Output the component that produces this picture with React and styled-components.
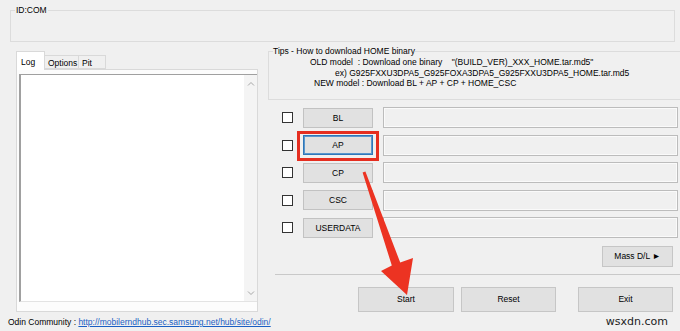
import styled, { createGlobalStyle } from 'styled-components'

const GlobalStyle = createGlobalStyle`
  html, body {
    margin: 0;
    padding: 0;
    background: #f0f0f0;
  }
  body {
    font-family: "Liberation Sans", Arial, sans-serif;
    font-size: 8.5px;
    color: #000;
  }
`

const Window = styled.div`
  position: relative;
  width: 680px;
  height: 331px;
  overflow: hidden;
  background: #f0f0f0;
  display: flex;
  flex-direction: column;
`

const GroupBox = styled.fieldset`
  margin: 0;
  padding: 0 0 0 4px;
  border: 1px solid #dcdcdc;
  min-width: 0;

  legend {
    padding: 0 1px;
    line-height: 10px;
  }
`

const IdGroup = styled(GroupBox)`
  margin: 5px 5px 0 10px;
`

const IdBody = styled.div`
  height: 26px;
`

const Main = styled.div`
  display: flex;
  margin-top: 4px;
  padding-left: 16px;
`

const LeftCol = styled.div`
  width: 242px;
  margin-right: 10px;
  padding-top: 4px;
  display: flex;
  flex-direction: column;
`

const TabRow = styled.div`
  display: flex;
  align-items: flex-end;
  height: 19px;
`

const Tab = styled.div`
  position: relative;
  z-index: ${(p) => (p.$active ? 1 : 0)};
  height: ${(p) => (p.$active ? '19px' : '14px')};
  width: ${(p) => p.$w}px;
  box-sizing: border-box;
  padding: ${(p) => (p.$active ? '5px 0 0 4px' : '2px 0 0 3px')};
  background: ${(p) => (p.$active ? '#fff' : '#f0f0f0')};
  border: 1px solid #d9d9d9;
  border-bottom: ${(p) => (p.$active ? 'none' : '1px solid #d9d9d9')};
  margin-left: ${(p) => (p.$active ? '0' : '-1px')};
  margin-bottom: ${(p) => (p.$active ? '-1px' : '0')};
`

const Pane = styled.div`
  height: 243px;
  box-sizing: border-box;
  background: #fcfcfc;
  border: 1px solid #d9d9d9;
  padding: 4px 0 9px 2px;
  display: flex;
`

const LogArea = styled.div`
  flex: 1;
  display: flex;
  background: #fff;
  border-top: 1px solid #a0a0a0;
  border-left: 2px solid #a0a0a0;
  border-bottom: 1px solid #e3e3e3;
`

const LogText = styled.div`
  flex: 1;
`

const ScrollBar = styled.div`
  width: 13px;
  background: #f4f4f4;
  display: flex;
  flex-direction: column;
  justify-content: space-between;
  align-items: center;
  padding: 6px 0 5px;
`

const RightCol = styled.div`
  flex: 1;
  display: flex;
  flex-direction: column;
`

const TipsGroup = styled(GroupBox)`
  margin-right: -10px;
  padding-bottom: 10px;

  legend {
    padding: 0;
  }
`

const TipLine = styled.div`
  line-height: 10.5px;
  white-space: pre;
  padding-left: ${(p) => p.$indent}px;
  &:first-of-type {
    margin-top: 1px;
  }
`

const SlotList = styled.div`
  display: flex;
  flex-direction: column;
  gap: 7.5px;
  margin-top: 8px;
  padding-left: 14px;
`

const SlotRow = styled.div`
  display: flex;
  align-items: center;
  height: 20px;
`

const Check = styled.span`
  width: 11px;
  height: 11px;
  box-sizing: border-box;
  background: #fff;
  border: 1px solid #333;
  margin-right: 10px;
`

const SlotButton = styled.button`
  position: relative;
  width: 70px;
  height: 20px;
  margin: 0 10px 0 0;
  padding: 0;
  font: inherit;
  color: #000;
  background: #e1e1e1;
  border: 1px solid ${(p) => (p.$focus ? '#2f76b8' : '#c2c2c2')};
  box-shadow: ${(p) => (p.$focus ? 'inset 0 0 0 1px #5a97cd' : 'none')};
`

const Highlight = styled.span`
  position: absolute;
  left: -7px;
  right: -7px;
  top: -5px;
  bottom: -7px;
  border: 3px solid #e52e20;
  pointer-events: none;
`

const PathField = styled.div`
  width: 295px;
  height: 21px;
  box-sizing: border-box;
  background: #f0f0f0;
  border: 1px solid #bcbcbc;
  box-shadow: inset 0 0 0 1px #fafafa;
`

const MassRow = styled.div`
  display: flex;
  justify-content: flex-end;
  margin-top: 8px;
  padding-right: 7px;
`

const Separator = styled.div`
  height: 1px;
  background: #c9c9c9;
  margin: 7px 0 0 7px;
`

const ActionRow = styled.div`
  display: flex;
  justify-content: flex-end;
  gap: 7px;
  margin-top: 12px;
  padding-right: 7px;
`

const WinButton = styled.button`
  width: ${(p) => p.$w}px;
  height: ${(p) => p.$h}px;
  margin: 0;
  margin-left: ${(p) => p.$ml || 0}px;
  padding: 0;
  font: inherit;
  color: #000;
  background: #e1e1e1;
  border: 1px solid #c6c6c6;
`

const Footer = styled.div`
  display: flex;
  justify-content: space-between;
  align-items: center;
  margin-top: 5px;
  padding: 0 12px 0 8px;
  line-height: 10px;
`

const Link = styled.a`
  color: #1a5fc4;
  text-decoration: underline;
`

const Watermark = styled.span`
  font-family: "DejaVu Sans", Verdana, sans-serif;
  font-size: 11px;
  color: #222;
`

const Overlay = styled.svg`
  position: absolute;
  left: 0;
  top: 0;
  pointer-events: none;
`

const Chevron = ({ up }) => (
  <svg width='8' height='5' viewBox='0 0 8 5'>
    <polyline
      points={up ? '1,4.5 4,1.5 7,4.5' : '1,0.5 4,3.5 7,0.5'}
      fill='none'
      stroke='#a6a6a6'
      strokeWidth='1'
    />
  </svg>
)

const slots = ['BL', 'AP', 'CP', 'CSC', 'USERDATA']

const App = () => {
  return (
    <Window>
      <GlobalStyle />
      <IdGroup>
        <legend>ID:COM</legend>
        <IdBody />
      </IdGroup>
      <Main>
        <LeftCol>
          <TabRow>
            <Tab $active $w={29}>Log</Tab>
            <Tab $w={35}>Options</Tab>
            <Tab $w={28}>Pit</Tab>
          </TabRow>
          <Pane>
            <LogArea>
              <LogText />
              <ScrollBar>
                <Chevron up />
                <Chevron />
              </ScrollBar>
            </LogArea>
          </Pane>
        </LeftCol>
        <RightCol>
          <TipsGroup>
            <legend>Tips - How to download HOME binary</legend>
            <TipLine $indent={37}>
              {'OLD model  : Download one binary    "(BUILD_VER)_XXX_HOME.tar.md5"'}
            </TipLine>
            <TipLine $indent={62}>
              ex) G925FXXU3DPA5_G925FOXA3DPA5_G925FXXU3DPA5_HOME.tar.md5
            </TipLine>
            <TipLine $indent={41}>
              NEW model : Download BL + AP + CP + HOME_CSC
            </TipLine>
          </TipsGroup>
          <SlotList>
            {slots.map((name) => (
              <SlotRow key={name}>
                <Check />
                <SlotButton $focus={name === 'AP'}>
                  {name}
                  {name === 'AP' && <Highlight />}
                </SlotButton>
                <PathField />
              </SlotRow>
            ))}
          </SlotList>
          <MassRow>
            <WinButton $w={71} $h={21}>Mass D/L ►</WinButton>
          </MassRow>
          <Separator />
          <ActionRow>
            <WinButton $w={96} $h={25}>Start</WinButton>
            <WinButton $w={95} $h={25}>Reset</WinButton>
            <WinButton $w={95} $h={25} $ml={15}>Exit</WinButton>
          </ActionRow>
        </RightCol>
      </Main>
      <Footer>
        <span>
          Odin Community : <Link href='#'>http://mobilerndhub.sec.samsung.net/hub/site/odin/</Link>
        </span>
        <Watermark>wsxdn.com</Watermark>
      </Footer>
      <Overlay width='680' height='331' viewBox='0 0 680 331'>
        <polygon
          points='362.6,172.5 391.8,265.5 381,271 407,295 413,258 400.2,262.5 365.4,171.5'
          fill='#ec3322'
        />
      </Overlay>
    </Window>
  )
}

export default App
